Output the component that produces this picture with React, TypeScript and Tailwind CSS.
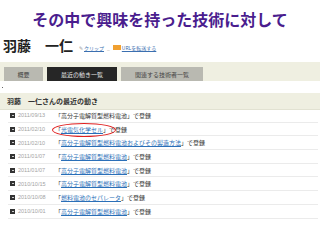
type Entry = {
  date: string;
  title: string;
  linked: boolean;
};

const entries: Entry[] = [
  { date: "2011/09/13", title: "高分子電解質型燃料電池", linked: false },
  { date: "2011/02/10", title: "光電気化学セル", linked: true },
  { date: "2011/02/10", title: "高分子電解質型燃料電池およびその製造方法", linked: true },
  { date: "2011/01/07", title: "高分子電解質型燃料電池", linked: true },
  { date: "2011/01/07", title: "高分子電解質型燃料電池", linked: true },
  { date: "2010/10/15", title: "高分子電解質型燃料電池", linked: true },
  { date: "2010/10/08", title: "燃料電池のセパレータ", linked: true },
  { date: "2010/10/01", title: "高分子電解質型燃料電池", linked: true },
];

const jp = "font-['Noto_Sans_CJK_JP',sans-serif]";

function Tab({ label, active, width }: { label: string; active?: boolean; width: string }) {
  return (
    <div
      className={`${width} h-[14px] flex items-center justify-center text-[6px] ${
        active ? "bg-[#262626] text-[#e8e8e8]" : "bg-[#b9b9b1] text-[#444]"
      }`}
    >
      {label}
    </div>
  );
}

function Row({ date, title, linked }: Entry) {
  return (
    <div className="h-[13.7px] flex items-center border-b border-[#ebebeb]">
      <span className="ml-[2px] w-[5px] h-[5px] bg-[#333] flex items-center justify-center">
        <span className="w-[2px] h-[1px] bg-[#ccc]" />
      </span>
      <span className="ml-[3px] w-[37px] font-['Liberation_Sans',sans-serif] text-[5.5px] text-[#a3a3a3]">
        {date}
      </span>
      <span className="text-[6px] text-[#333] whitespace-nowrap">
        「
        {linked ? (
          <span className="text-[#2a6fb8] underline">{title}</span>
        ) : (
          <span>{title}</span>
        )}
        」で登録
      </span>
    </div>
  );
}

export default function App() {
  return (
    <div className={`relative w-[320px] h-[240px] overflow-hidden bg-white ${jp}`}>
      <h1 className="pt-[8px] text-center text-[16px] leading-[22px] font-bold text-[#4a1d8e]">
        その中で興味を持った技術に対して
      </h1>

      <div className="mt-[7px] ml-[3px] flex items-end">
        <span className="text-[14px] leading-[16px] font-bold text-[#222]">羽藤　一仁</span>
        <span className="ml-[6px] mb-[2px] flex items-center text-[5px] text-[#3b6fb0]">
          <span className="text-[#999] mr-[1px]">✎</span>
          <span className="underline">クリップ</span>
          <span className="mx-[3px] text-[#999]">_</span>
          <span className="w-[8px] h-[5px] bg-[#f0a030] mr-[1px]" />
          <span className="underline">URLを転送する</span>
        </span>
      </div>

      <div className="mt-[9px] h-[19px] bg-[#efefe1] flex items-end gap-[4px] pl-[4px]">
        <Tab label="概要" width="w-[39px]" />
        <Tab label="最近の動き一覧" width="w-[70px]" active />
        <Tab label="関連する技術者一覧" width="w-[82px]" />
      </div>

      <div className="mt-[6px] ml-[2px] w-[1px] h-[1px] bg-[#666]" />

      <div className="mt-[5px] h-[17px] bg-[#efefe1] border-b border-[#e2e2d2] flex items-center pl-[7px] text-[7px] font-bold text-[#333]">
        羽藤　一仁さんの最近の動き
      </div>

      <div className="ml-[8px] mr-[2px] mt-[-1px]">
        {entries.map((entry, index) => (
          <Row key={index} {...entry} />
        ))}
      </div>

      <div className="absolute left-[52px] top-[123px] w-[64px] h-[14px] rounded-[50%] border-[1.5px] border-[#e02020]" />
    </div>
  );
}
